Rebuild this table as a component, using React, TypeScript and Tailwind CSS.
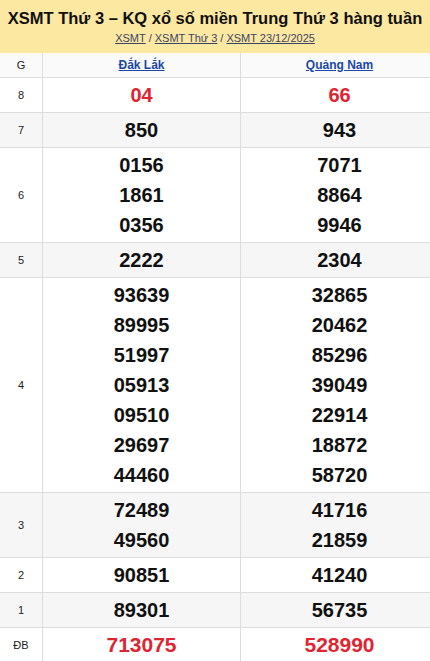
import React from 'react';

type Row = { label: string; left: string[]; right: string[]; red?: boolean; big?: boolean };

const rows: Row[] = [
  { label: '8', left: ['04'], right: ['66'], red: true },
  { label: '7', left: ['850'], right: ['943'] },
  { label: '6', left: ['0156', '1861', '0356'], right: ['7071', '8864', '9946'] },
  { label: '5', left: ['2222'], right: ['2304'] },
  {
    label: '4',
    left: ['93639', '89995', '51997', '05913', '09510', '29697', '44460'],
    right: ['32865', '20462', '85296', '39049', '22914', '18872', '58720'],
  },
  { label: '3', left: ['72489', '49560'], right: ['41716', '21859'] },
  { label: '2', left: ['90851'], right: ['41240'] },
  { label: '1', left: ['89301'], right: ['56735'] },
  { label: 'ĐB', left: ['713075'], right: ['528990'], red: true, big: true },
];

function NumCell({ nums, red, big }: { nums: string[]; red?: boolean; big?: boolean }) {
  return (
    <div className="flex flex-col items-center border-l border-[#dddddd] py-[2px]">
      {nums.map((n, i) => (
        <span
          key={i}
          className={`leading-[30px] font-bold ${big ? 'text-[21px]' : 'text-[20px]'} ${red ? 'text-[#df2531]' : 'text-[#111111]'}`}
        >
          {n}
        </span>
      ))}
    </div>
  );
}

export default function App() {
  return (
    <div className="w-[430px] overflow-hidden bg-white font-['Liberation_Sans',Arial,sans-serif]">
      <div className="bg-[#fde8a1] pt-[7px] pb-[8px] text-center">
        <h1 className="text-[16.5px] leading-[22px] font-bold text-[#111111] whitespace-nowrap">
          XSMT Thứ 3 – KQ xổ số miền Trung Thứ 3 hàng tuần
        </h1>
        <div className="mt-[2px] text-[11px] leading-[14px] text-[#3a4566]">
          <a className="underline">XSMT</a>
          <span className="mx-[3px]">/</span>
          <a className="underline">XSMT Thứ 3</a>
          <span className="mx-[3px]">/</span>
          <a className="underline">XSMT 23/12/2025</a>
        </div>
      </div>
      <div className="w-[438px]">
        <div className="grid grid-cols-[42px_198px_198px] border-b border-[#dddddd] bg-[#fafafa] h-[25px] items-stretch">
          <div className="flex items-center justify-center text-[11px] text-[#222222]">G</div>
          <div className="flex items-center justify-center border-l border-[#dddddd] text-[12px] font-bold text-[#1a47a8] underline">
            Đắk Lắk
          </div>
          <div className="flex items-center justify-center border-l border-[#dddddd] text-[12px] font-bold text-[#1a47a8] underline">
            Quảng Nam
          </div>
        </div>
        {rows.map((r, i) => (
          <div
            key={r.label}
            className={`grid grid-cols-[42px_198px_198px] border-b border-[#dddddd] ${i % 2 === 1 ? 'bg-[#f6f6f6]' : 'bg-white'}`}
          >
            <div className="flex items-center justify-center text-[11px] text-[#222222]">{r.label}</div>
            <NumCell nums={r.left} red={r.red} big={r.big} />
            <NumCell nums={r.right} red={r.red} big={r.big} />
          </div>
        ))}
      </div>
    </div>
  );
}
